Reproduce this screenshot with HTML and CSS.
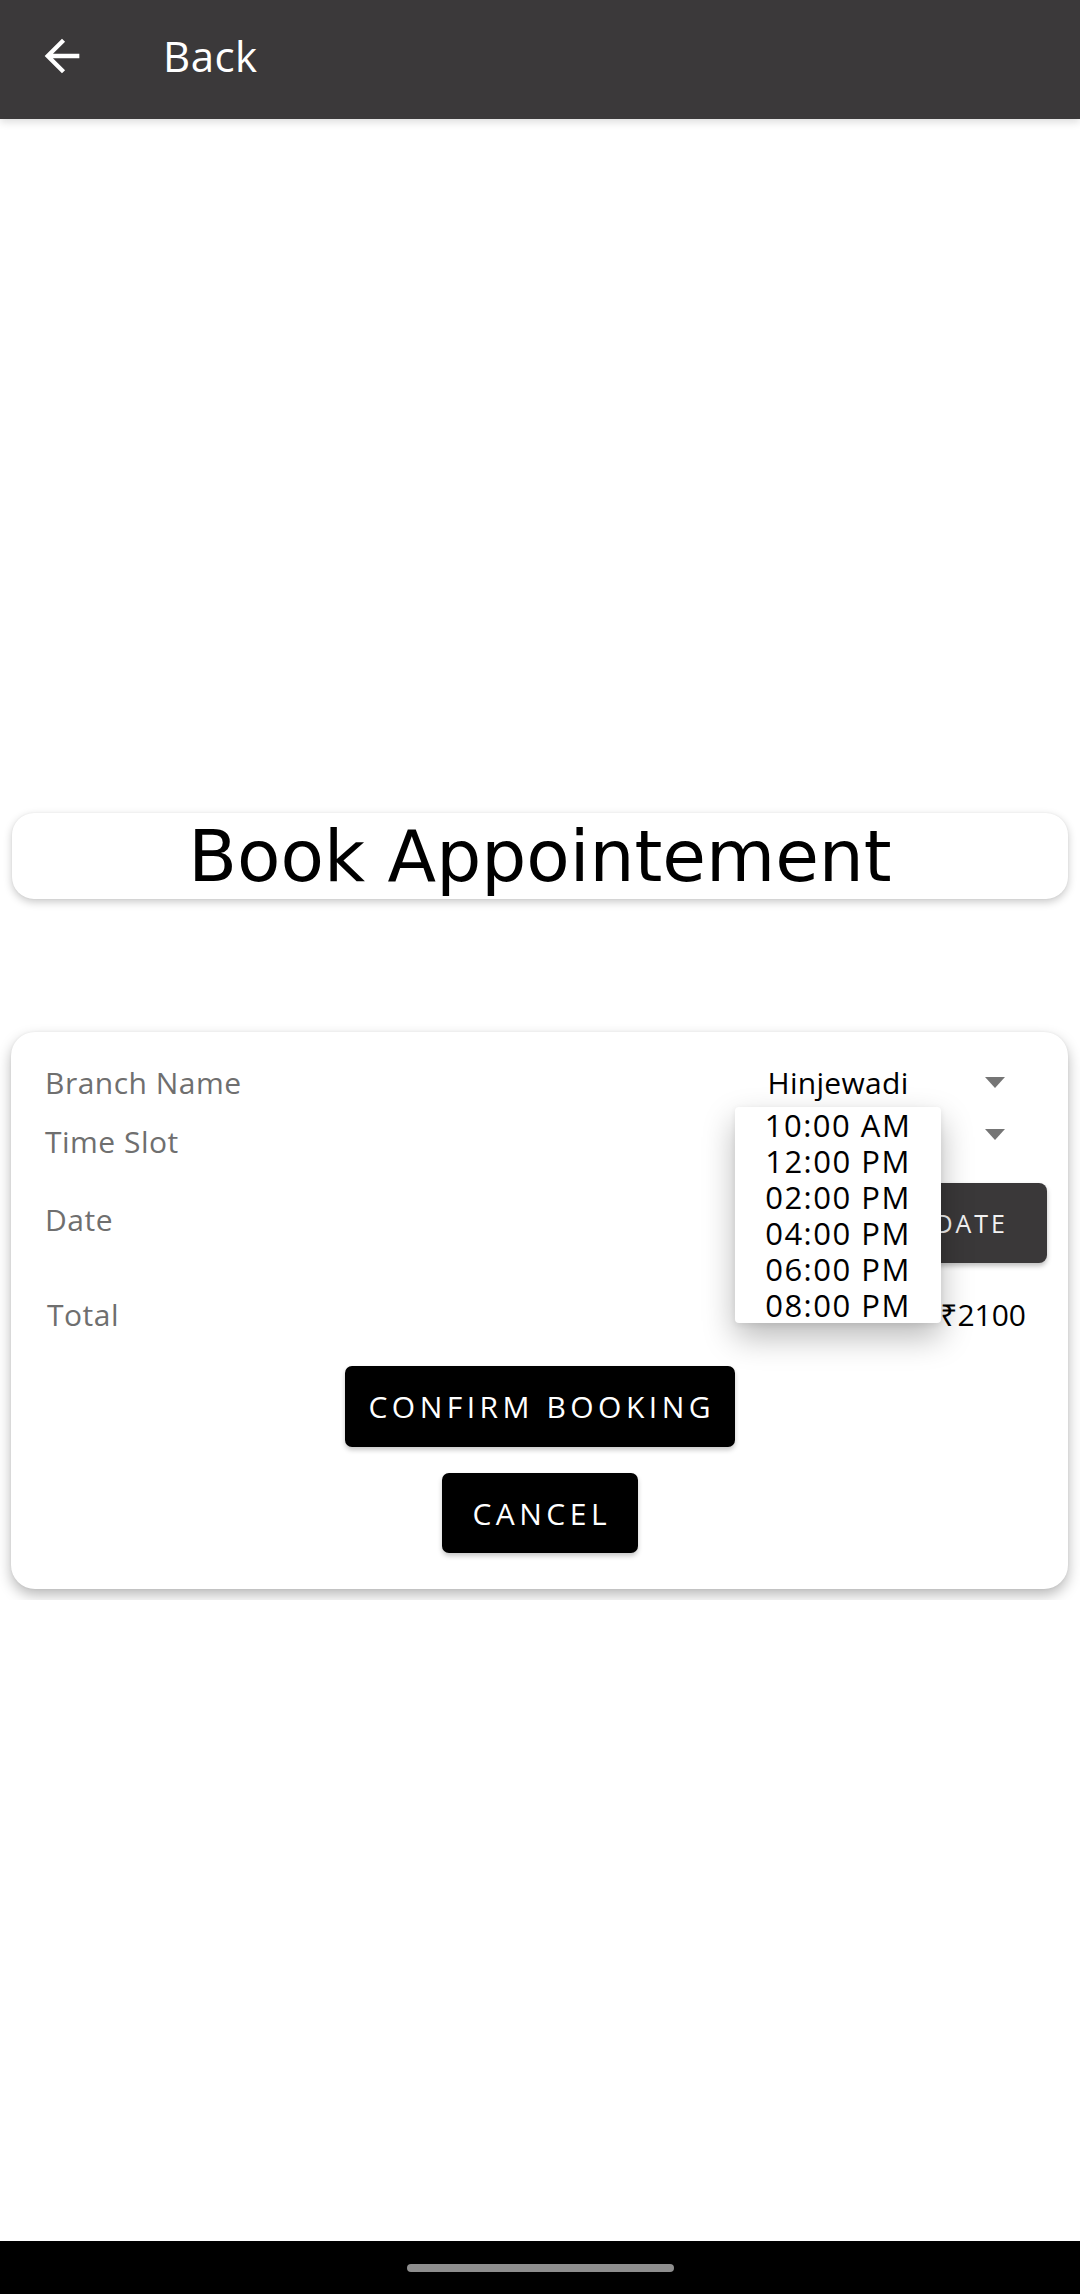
FILE: index.html
```html
<!DOCTYPE html>
<html lang="en">
<head>
<meta charset="utf-8">
<title>Book Appointement</title>
<link rel="stylesheet" href="styles.css">
</head>
<body>
<div class="screen">
  <header class="appbar">
    <svg class="back-icon" viewBox="0 0 24 24" width="52" height="52" aria-hidden="true">
      <path d="M20 11H7.83l5.59-5.59L12 4l-8 8 8 8 1.41-1.41L7.83 13H20v-2z" fill="#ffffff"/>
    </svg>
    <span class="appbar-title">Back</span>
  </header>

  <main class="content">
    <div class="title-card">Book Appointement</div>

    <div class="form-wrap">
      <section class="form-card">
        <div class="row row-spinner">
          <span class="label">Branch Name</span>
          <div class="spinner">
            <span class="spinner-text">Hinjewadi</span>
            <span class="caret"></span>
          </div>
        </div>
        <div class="row row-spinner">
          <span class="label">Time Slot</span>
          <div class="spinner">
            <span class="spinner-text"></span>
            <span class="caret caret-up"></span>
          </div>
        </div>
        <div class="row row-date">
          <span class="label label-date">Date</span>
          <button class="date-btn">SELECT DATE</button>
        </div>
        <div class="row row-total">
          <span class="label label-total">Total</span>
          <span class="total-value">₹2100</span>
        </div>
        <div class="actions">
          <button class="btn btn-confirm">CONFIRM BOOKING</button>
          <button class="btn btn-cancel">CANCEL</button>
        </div>

        <ul class="dropdown">
          <li>10:00 AM</li>
          <li>12:00 PM</li>
          <li>02:00 PM</li>
          <li>04:00 PM</li>
          <li>06:00 PM</li>
          <li>08:00 PM</li>
        </ul>
      </section>
    </div>
  </main>

  <footer class="navbar">
    <span class="home-pill"></span>
  </footer>
</div>
</body>
</html>
```

FILE: styles.css
```css
* {
  box-sizing: border-box;
}

html, body {
  margin: 0;
  padding: 0;
  background: #ffffff;
}

body {
  font-family: "Open Sans", "Noto Sans", sans-serif;
  color: #000000;
}

.screen {
  min-height: 100vh;
  display: flex;
  flex-direction: column;
}

/* App bar */
.appbar {
  position: relative;
  z-index: 2;
  height: 119px;
  background: #3b393a;
  display: flex;
  align-items: center;
  padding: 0 0 7px 36px;
  box-shadow: 0 3px 8px rgba(0, 0, 0, 0.14);
}

.back-icon {
  display: block;
  flex: none;
}

.appbar-title {
  margin-left: 75px;
  color: #ffffff;
  font-size: 42px;
  line-height: 52px;
  letter-spacing: 0.5px;
}

/* Content */
.content {
  flex: 1;
}

.title-card {
  margin: 694px 12px 0 12px;
  height: 86px;
  padding-top: 4px;
  background: #ffffff;
  border-radius: 22px;
  box-shadow: 0 3px 8px rgba(0, 0, 0, 0.22), 0 0 2px rgba(0, 0, 0, 0.06);
  font-family: "DejaVu Sans", sans-serif;
  font-size: 71px;
  line-height: 80px;
  text-align: center;
  color: #000000;
}

.form-wrap {
  margin-top: 113px;
  padding: 20px 0 11px 0;
  overflow: hidden;
}

.form-card {
  position: relative;
  margin: 0 12px 0 11px;
  padding: 21px 21px 36px 34px;
  background: #ffffff;
  border-radius: 24px;
  box-shadow: 0 6px 14px rgba(0, 0, 0, 0.28), 0 0 3px rgba(0, 0, 0, 0.06);
}

.row {
  display: flex;
  align-items: center;
}

.row-spinner {
  height: 59px;
}

.label {
  font-size: 30px;
  line-height: 36px;
  color: #6f6f6f;
  letter-spacing: 0.5px;
}

.spinner {
  margin-left: auto;
  margin-right: 42px;
  width: 270px;
  display: flex;
  align-items: center;
}

.spinner-text {
  width: 206px;
  text-align: center;
  font-size: 30px;
  line-height: 36px;
  color: #000000;
  letter-spacing: 0.3px;
}

.caret {
  margin-left: auto;
  width: 0;
  height: 0;
  border-left: 10.5px solid transparent;
  border-right: 10.5px solid transparent;
  border-top: 11px solid #757575;
}

.caret-up {
  margin-bottom: 14px;
}

.row-date {
  margin-top: 12px;
  height: 80px;
}

.label-date {
  padding-bottom: 6px;
}

.date-btn {
  margin-left: auto;
  height: 80px;
  padding: 0 39px;
  border: none;
  border-radius: 8px;
  background: #3a3839;
  color: #f2f2f2;
  font-family: "Open Sans", sans-serif;
  font-size: 25px;
  letter-spacing: 3px;
  box-shadow: 0 3px 5px rgba(0, 0, 0, 0.25);
}

.row-total {
  margin-top: 27px;
  height: 49px;
}

.label-total {
  padding-left: 2px;
}

.total-value {
  margin-left: auto;
  margin-right: 21px;
  font-size: 30px;
  line-height: 36px;
  color: #000000;
}

.actions {
  margin: 27px -21px 0 -34px;
  display: flex;
  flex-direction: column;
  align-items: center;
  gap: 26px;
}

.btn {
  border: none;
  background: #000000;
  color: #ffffff;
  font-family: "Open Sans", sans-serif;
  font-size: 30px;
  letter-spacing: 4.5px;
  border-radius: 7px;
  box-shadow: 0 3px 5px rgba(0, 0, 0, 0.22);
  padding: 0 0 0 4.5px;
}

.btn-confirm {
  width: 390px;
  height: 81px;
}

.btn-cancel {
  width: 196px;
  height: 80px;
}

/* Dropdown popup (overlays the form) */
.dropdown {
  position: absolute;
  left: 724px;
  top: 75px;
  width: 206px;
  margin: 0;
  padding: 0;
  list-style: none;
  background: #ffffff;
  border-radius: 4px;
  box-shadow: 0 14px 32px rgba(0, 0, 0, 0.28), 0 2px 6px rgba(0, 0, 0, 0.08);
}

.dropdown li {
  height: 36px;
  font-size: 31px;
  line-height: 36px;
  letter-spacing: 1.5px;
  text-align: center;
  color: #000000;
}

/* System navigation bar */
.navbar {
  height: 53px;
  background: #000000;
  display: flex;
  align-items: center;
  justify-content: center;
}

.home-pill {
  display: block;
  width: 267px;
  height: 8px;
  border-radius: 4px;
  background: #8e8e8e;
}
```
